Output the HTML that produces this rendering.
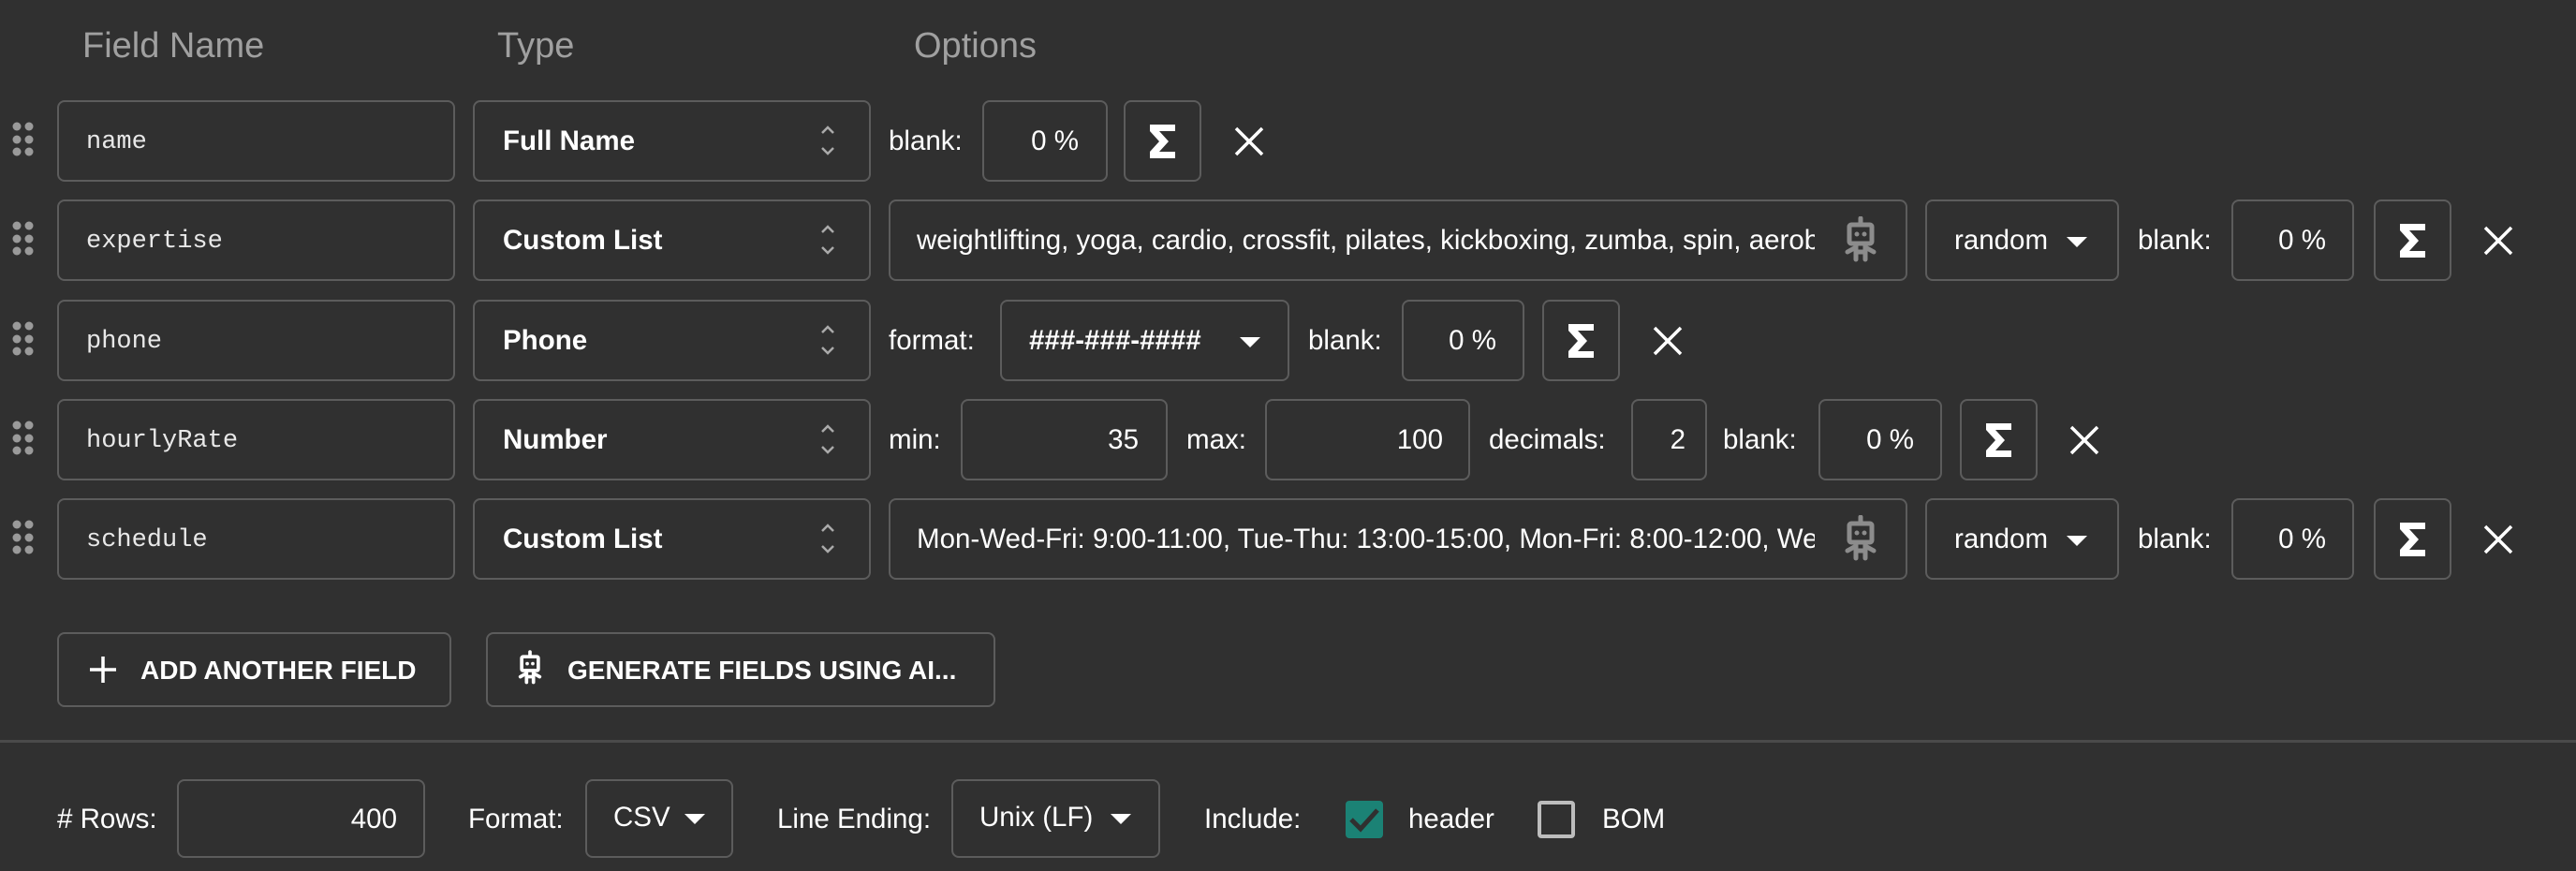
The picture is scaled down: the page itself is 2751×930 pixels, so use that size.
<!DOCTYPE html>
<html><head><meta charset="utf-8"><style>
html,body{margin:0;padding:0}
body{width:2751px;height:930px;background:#303030;position:relative;overflow:hidden;font-family:"Liberation Sans",Arial,sans-serif;color:#fff}
.a{position:absolute}
.h{position:absolute;top:28px;font-size:38px;color:#a0a0a0}
.box{position:absolute;border:2px solid #5c5c5c;border-radius:8px;box-sizing:border-box}
.t{position:absolute;font-size:29.5px;line-height:32px;white-space:nowrap}
.mono{font-family:"Liberation Mono","DejaVu Sans Mono",monospace;font-size:27px;color:#e8e8e8}
.b{font-weight:bold}
.tri{position:absolute;width:0;height:0;border-left:11px solid transparent;border-right:11px solid transparent;border-top:11px solid #fff}
</style></head><body>
<div class="h" style="left:88px">Field Name</div>
<div class="h" style="left:531px">Type</div>
<div class="h" style="left:976px">Options</div>

<!-- ROW 1 -->
<svg class="a" style="left:12px;top:128px" width="30" height="45"><g fill="#9a9a9a"><circle cx="6" cy="7" r="4.5"/><circle cx="19" cy="7" r="4.5"/><circle cx="6" cy="21" r="4.5"/><circle cx="19" cy="21" r="4.5"/><circle cx="6" cy="34" r="4.5"/><circle cx="19" cy="34" r="4.5"/></g></svg>
<div class="box" style="left:61px;top:107px;width:425px;height:87px"></div>
<div class="t mono" style="left:92px;top:136px">name</div>
<div class="box" style="left:505px;top:107px;width:425px;height:87px"></div>
<div class="t b" style="left:537px;top:135px">Full Name</div>
<svg class="a" style="left:874px;top:132px" width="20" height="36"><path d="M4 10 L10 4 L16 10 M4 26 L10 32 L16 26" stroke="#aaa" stroke-width="2.5" fill="none"/></svg>
<div class="t" style="left:949px;top:135px">blank:</div>
<div class="box" style="left:1049px;top:107px;width:134px;height:87px"></div>
<div class="t" style="left:1049px;top:135px;width:103px;text-align:right">0 %</div>
<div class="box" style="left:1200px;top:107px;width:83px;height:87px"></div>
<svg class="a" style="left:1227px;top:133px" width="30" height="36"><path d="M1 0 H28 V7 H11 L21 18 L11 29 H28 V36 H1 V29 L11 18 L1 7 Z" fill="#fff"/></svg>
<svg class="a" style="left:1318px;top:135px" width="32" height="32"><path d="M2 2 L30 30 M30 2 L2 30" stroke="#fff" stroke-width="3.5"/></svg>

<!-- ROW 2 -->
<svg class="a" style="left:12px;top:234px" width="30" height="45"><g fill="#9a9a9a"><circle cx="6" cy="7" r="4.5"/><circle cx="19" cy="7" r="4.5"/><circle cx="6" cy="21" r="4.5"/><circle cx="19" cy="21" r="4.5"/><circle cx="6" cy="34" r="4.5"/><circle cx="19" cy="34" r="4.5"/></g></svg>
<div class="box" style="left:61px;top:213px;width:425px;height:87px"></div>
<div class="t mono" style="left:92px;top:242px">expertise</div>
<div class="box" style="left:505px;top:213px;width:425px;height:87px"></div>
<div class="t b" style="left:537px;top:241px">Custom List</div>
<svg class="a" style="left:874px;top:238px" width="20" height="36"><path d="M4 10 L10 4 L16 10 M4 26 L10 32 L16 26" stroke="#aaa" stroke-width="2.5" fill="none"/></svg>
<div class="box" style="left:949px;top:213px;width:1088px;height:87px"></div>
<div class="t" style="left:979px;top:241px;width:959px;overflow:hidden">weightlifting, yoga, cardio, crossfit, pilates, kickboxing, zumba, spin, aerobics</div>
<svg class="a" style="left:1968px;top:231px" width="38" height="50" viewBox="0 0 38 50"><g fill="none" stroke="#8c8c8c" stroke-width="5" stroke-linejoin="round" stroke-linecap="round"><rect x="7" y="9" width="24" height="20" rx="2"/><path d="M19 2 V9 M14 29 V46 M24 29 V46 M14 38 H24 M14 33 L5 38 M24 33 L33 38"/></g><circle cx="15" cy="19" r="2.5" fill="#8c8c8c"/><circle cx="23" cy="19" r="2.5" fill="#8c8c8c"/></svg>
<div class="box" style="left:2056px;top:213px;width:207px;height:87px"></div>
<div class="t" style="left:2087px;top:241px">random</div>
<div class="tri" style="left:2207px;top:253px"></div>
<div class="t" style="left:2283px;top:241px">blank:</div>
<div class="box" style="left:2383px;top:213px;width:131px;height:87px"></div>
<div class="t" style="left:2383px;top:241px;width:101px;text-align:right">0 %</div>
<div class="box" style="left:2535px;top:213px;width:83px;height:87px"></div>
<svg class="a" style="left:2562px;top:239px" width="30" height="36"><path d="M1 0 H28 V7 H11 L21 18 L11 29 H28 V36 H1 V29 L11 18 L1 7 Z" fill="#fff"/></svg>
<svg class="a" style="left:2652px;top:241px" width="32" height="32"><path d="M2 2 L30 30 M30 2 L2 30" stroke="#fff" stroke-width="3.5"/></svg>

<!-- ROW 3 -->
<svg class="a" style="left:12px;top:341px" width="30" height="45"><g fill="#9a9a9a"><circle cx="6" cy="7" r="4.5"/><circle cx="19" cy="7" r="4.5"/><circle cx="6" cy="21" r="4.5"/><circle cx="19" cy="21" r="4.5"/><circle cx="6" cy="34" r="4.5"/><circle cx="19" cy="34" r="4.5"/></g></svg>
<div class="box" style="left:61px;top:320px;width:425px;height:87px"></div>
<div class="t mono" style="left:92px;top:349px">phone</div>
<div class="box" style="left:505px;top:320px;width:425px;height:87px"></div>
<div class="t b" style="left:537px;top:348px">Phone</div>
<svg class="a" style="left:874px;top:345px" width="20" height="36"><path d="M4 10 L10 4 L16 10 M4 26 L10 32 L16 26" stroke="#aaa" stroke-width="2.5" fill="none"/></svg>
<div class="t" style="left:949px;top:348px">format:</div>
<div class="box" style="left:1068px;top:320px;width:309px;height:87px"></div>
<div class="t b" style="left:1099px;top:348px">###-###-####</div>
<div class="tri" style="left:1324px;top:360px"></div>
<div class="t" style="left:1397px;top:348px">blank:</div>
<div class="box" style="left:1497px;top:320px;width:131px;height:87px"></div>
<div class="t" style="left:1497px;top:348px;width:101px;text-align:right">0 %</div>
<div class="box" style="left:1647px;top:320px;width:83px;height:87px"></div>
<svg class="a" style="left:1674px;top:346px" width="30" height="36"><path d="M1 0 H28 V7 H11 L21 18 L11 29 H28 V36 H1 V29 L11 18 L1 7 Z" fill="#fff"/></svg>
<svg class="a" style="left:1765px;top:348px" width="32" height="32"><path d="M2 2 L30 30 M30 2 L2 30" stroke="#fff" stroke-width="3.5"/></svg>

<!-- ROW 4 -->
<svg class="a" style="left:12px;top:447px" width="30" height="45"><g fill="#9a9a9a"><circle cx="6" cy="7" r="4.5"/><circle cx="19" cy="7" r="4.5"/><circle cx="6" cy="21" r="4.5"/><circle cx="19" cy="21" r="4.5"/><circle cx="6" cy="34" r="4.5"/><circle cx="19" cy="34" r="4.5"/></g></svg>
<div class="box" style="left:61px;top:426px;width:425px;height:87px"></div>
<div class="t mono" style="left:92px;top:455px">hourlyRate</div>
<div class="box" style="left:505px;top:426px;width:425px;height:87px"></div>
<div class="t b" style="left:537px;top:454px">Number</div>
<svg class="a" style="left:874px;top:451px" width="20" height="36"><path d="M4 10 L10 4 L16 10 M4 26 L10 32 L16 26" stroke="#aaa" stroke-width="2.5" fill="none"/></svg>
<div class="t" style="left:949px;top:454px">min:</div>
<div class="box" style="left:1026px;top:426px;width:221px;height:87px"></div>
<div class="t" style="left:1026px;top:454px;width:190px;text-align:right">35</div>
<div class="t" style="left:1267px;top:454px">max:</div>
<div class="box" style="left:1351px;top:426px;width:219px;height:87px"></div>
<div class="t" style="left:1351px;top:454px;width:190px;text-align:right">100</div>
<div class="t" style="left:1590px;top:454px">decimals:</div>
<div class="box" style="left:1742px;top:426px;width:81px;height:87px"></div>
<div class="t" style="left:1742px;top:454px;width:58px;text-align:right">2</div>
<div class="t" style="left:1840px;top:454px">blank:</div>
<div class="box" style="left:1942px;top:426px;width:132px;height:87px"></div>
<div class="t" style="left:1942px;top:454px;width:102px;text-align:right">0 %</div>
<div class="box" style="left:2093px;top:426px;width:83px;height:87px"></div>
<svg class="a" style="left:2120px;top:452px" width="30" height="36"><path d="M1 0 H28 V7 H11 L21 18 L11 29 H28 V36 H1 V29 L11 18 L1 7 Z" fill="#fff"/></svg>
<svg class="a" style="left:2210px;top:454px" width="32" height="32"><path d="M2 2 L30 30 M30 2 L2 30" stroke="#fff" stroke-width="3.5"/></svg>

<!-- ROW 5 -->
<svg class="a" style="left:12px;top:553px" width="30" height="45"><g fill="#9a9a9a"><circle cx="6" cy="7" r="4.5"/><circle cx="19" cy="7" r="4.5"/><circle cx="6" cy="21" r="4.5"/><circle cx="19" cy="21" r="4.5"/><circle cx="6" cy="34" r="4.5"/><circle cx="19" cy="34" r="4.5"/></g></svg>
<div class="box" style="left:61px;top:532px;width:425px;height:87px"></div>
<div class="t mono" style="left:92px;top:561px">schedule</div>
<div class="box" style="left:505px;top:532px;width:425px;height:87px"></div>
<div class="t b" style="left:537px;top:560px">Custom List</div>
<svg class="a" style="left:874px;top:557px" width="20" height="36"><path d="M4 10 L10 4 L16 10 M4 26 L10 32 L16 26" stroke="#aaa" stroke-width="2.5" fill="none"/></svg>
<div class="box" style="left:949px;top:532px;width:1088px;height:87px"></div>
<div class="t" style="left:979px;top:560px;width:959px;overflow:hidden">Mon-Wed-Fri: 9:00-11:00, Tue-Thu: 13:00-15:00, Mon-Fri: 8:00-12:00, Wed</div>
<svg class="a" style="left:1968px;top:550px" width="38" height="50" viewBox="0 0 38 50"><g fill="none" stroke="#8c8c8c" stroke-width="5" stroke-linejoin="round" stroke-linecap="round"><rect x="7" y="9" width="24" height="20" rx="2"/><path d="M19 2 V9 M14 29 V46 M24 29 V46 M14 38 H24 M14 33 L5 38 M24 33 L33 38"/></g><circle cx="15" cy="19" r="2.5" fill="#8c8c8c"/><circle cx="23" cy="19" r="2.5" fill="#8c8c8c"/></svg>
<div class="box" style="left:2056px;top:532px;width:207px;height:87px"></div>
<div class="t" style="left:2087px;top:560px">random</div>
<div class="tri" style="left:2207px;top:572px"></div>
<div class="t" style="left:2283px;top:560px">blank:</div>
<div class="box" style="left:2383px;top:532px;width:131px;height:87px"></div>
<div class="t" style="left:2383px;top:560px;width:101px;text-align:right">0 %</div>
<div class="box" style="left:2535px;top:532px;width:83px;height:87px"></div>
<svg class="a" style="left:2562px;top:558px" width="30" height="36"><path d="M1 0 H28 V7 H11 L21 18 L11 29 H28 V36 H1 V29 L11 18 L1 7 Z" fill="#fff"/></svg>
<svg class="a" style="left:2652px;top:560px" width="32" height="32"><path d="M2 2 L30 30 M30 2 L2 30" stroke="#fff" stroke-width="3.5"/></svg>

<!-- buttons -->
<div class="box" style="left:61px;top:675px;width:421px;height:80px"></div>
<svg class="a" style="left:96px;top:701px" width="28" height="28"><path d="M14 0 V28 M0 14 H28" stroke="#fff" stroke-width="3.5"/></svg>
<div class="t b" style="left:150px;top:700px;font-size:28px">ADD ANOTHER FIELD</div>
<div class="box" style="left:519px;top:675px;width:544px;height:80px"></div>
<svg class="a" style="left:552px;top:693px" width="28" height="40" viewBox="0 0 38 50"><g fill="none" stroke="#fff" stroke-width="5" stroke-linejoin="round" stroke-linecap="round"><rect x="7" y="9" width="24" height="20" rx="2"/><path d="M19 2 V9 M14 29 V46 M24 29 V46 M14 38 H24 M14 33 L5 38 M24 33 L33 38"/></g><circle cx="15" cy="19" r="2.5" fill="#fff"/><circle cx="23" cy="19" r="2.5" fill="#fff"/></svg>
<div class="t b" style="left:606px;top:700px;font-size:28px">GENERATE FIELDS USING AI...</div>

<div class="a" style="left:0;top:790px;width:2751px;height:3px;background:#4a4a4a"></div>

<!-- bottom -->
<div class="t" style="left:61px;top:859px">&#35; Rows:</div>
<div class="box" style="left:189px;top:832px;width:265px;height:84px"></div>
<div class="t" style="left:189px;top:859px;width:235px;text-align:right">400</div>
<div class="t" style="left:500px;top:859px">Format:</div>
<div class="box" style="left:625px;top:832px;width:158px;height:84px"></div>
<div class="t" style="left:655px;top:857px">CSV</div>
<div class="tri" style="left:731px;top:869px"></div>
<div class="t" style="left:830px;top:859px">Line Ending:</div>
<div class="box" style="left:1016px;top:832px;width:223px;height:84px"></div>
<div class="t" style="left:1046px;top:857px">Unix (LF)</div>
<div class="tri" style="left:1186px;top:869px"></div>
<div class="t" style="left:1286px;top:859px">Include:</div>
<div class="a" style="left:1437px;top:855px;width:40px;height:40px;background:#1b8275;border-radius:4px"></div>
<svg class="a" style="left:1437px;top:855px" width="40" height="40"><path d="M6 20 L16 30 L34 10" stroke="#303030" stroke-width="5" fill="none"/></svg>
<div class="t" style="left:1504px;top:859px">header</div>
<div class="a" style="left:1642px;top:855px;width:40px;height:40px;border:4px solid #bdbdbd;border-radius:4px;box-sizing:border-box"></div>
<div class="t" style="left:1711px;top:859px">BOM</div>
</body></html>
